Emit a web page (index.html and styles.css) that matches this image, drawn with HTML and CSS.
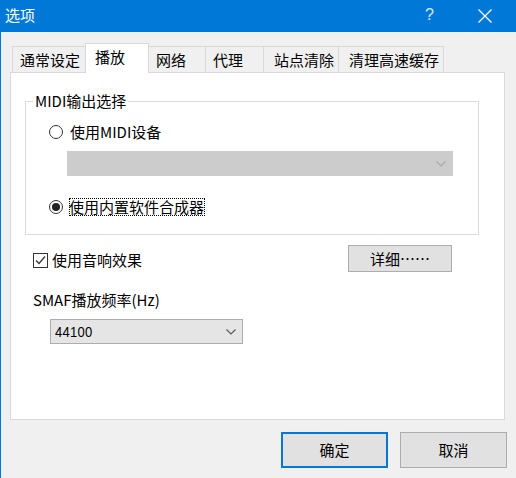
FILE: index.html
```html
<!DOCTYPE html>
<html lang="zh-CN">
<head>
<meta charset="utf-8">
<title>选项</title>
<link rel="stylesheet" href="styles.css">
</head>
<body>
<div class="window">
  <div class="titlebar">
    <span class="title">选项</span>
    <span class="help">?</span>
    <span class="close">
      <svg width="14" height="14" viewBox="0 0 14 14"><path d="M0.5 0.5 L13.5 13.5 M13.5 0.5 L0.5 13.5" stroke="#fff" stroke-width="1.2" fill="none"/></svg>
    </span>
  </div>
  <div class="body">
    <div class="tabs">
      <div class="tab w1">通常设定</div>
      <div class="tab sel w2">播放</div>
      <div class="tab w3">网络</div>
      <div class="tab w4">代理</div>
      <div class="tab w5">站点清除</div>
      <div class="tab w6">清理高速缓存</div>
    </div>
    <div class="pane">
      <div class="group">
        <div class="legend">MIDI输出选择</div>
        <div class="radio-row first"><span class="radio"></span><span>使用MIDI设备</span></div>
        <div class="combo disabled">
          <svg width="10" height="6" viewBox="0 0 10 6"><path d="M0.5 0.5 L5 5 L9.5 0.5" stroke="#a9a9a9" stroke-width="1.1" fill="none"/></svg>
        </div>
        <div class="radio-row second"><span class="radio on"></span><span class="focus">使用内置软件合成器</span></div>
      </div>
      <div class="effects-row">
        <div class="check-row">
          <span class="checkbox"><svg width="13" height="13" viewBox="0 0 13 13"><path d="M2 6.5 L5 9.5 L11 2.5" stroke="#333" stroke-width="1.2" fill="none"/></svg></span>
          <span>使用音响效果</span>
        </div>
        <div class="btn detail">详细……</div>
      </div>
      <div class="field-label">SMAF播放频率(Hz)</div>
      <div class="combo freq">
        <span class="value">44100</span>
        <svg width="10" height="6" viewBox="0 0 10 6"><path d="M0.5 0.5 L5 5 L9.5 0.5" stroke="#555" stroke-width="1.1" fill="none"/></svg>
      </div>
    </div>
    <div class="footer">
      <div class="btn big ok">确定</div>
      <div class="btn big">取消</div>
    </div>
  </div>
</div>
</body>
</html>
```

FILE: styles.css
```css
* { box-sizing: border-box; }
html, body { margin: 0; padding: 0; }
body {
  font-family: "Noto Sans CJK SC", "Noto Sans", sans-serif;
  font-size: 15px;
  color: #000;
  background: #f0f0f0;
}
.window {
  width: 516px;
  height: 478px;
  border-left: 1px solid #0078d7;
  background: #f0f0f0;
  display: flex;
  flex-direction: column;
  overflow: hidden;
}
.titlebar {
  height: 32px;
  background: #0078d7;
  color: #fff;
  display: flex;
  align-items: center;
  padding-left: 4px;
  flex-shrink: 0;
}
.title { line-height: 20px; flex: 1; margin-top: -2px; }
.help {
  font-family: "Liberation Sans", sans-serif;
  font-size: 16px;
  font-weight: 300;
  width: 12px;
  margin-right: 41px;
  margin-top: -2px;
  color: #dbe9f7;
}
.close { width: 14px; height: 14px; margin-right: 24px; margin-top: -1px; display: flex; }

.body { padding: 11px 0 0 9px; }

.tabs {
  display: flex;
  align-items: flex-end;
  height: 29px;
  margin-left: 2px;
}
.tab {
  height: 26px;
  border: 1px solid #d9d9d9;
  border-bottom: none;
  margin-right: -1px;
  background: #f0f0f0;
  display: flex;
  align-items: center;
  line-height: 20px;
  padding-top: 1px;
  padding-left: 7px;
}
.tab.sel {
  height: 30px;
  margin-bottom: -1px;
  background: #fff;
  position: relative;
  z-index: 1;
  padding-top: 0;
  padding-bottom: 4px;
  padding-left: 9px;
}
.w1 { width: 74px; }
.w2 { width: 64px; }
.w3 { width: 58px; }
.w4 { width: 59px; }
.w5 { width: 76px; padding-left: 10px; }
.w6 { width: 106px; padding-left: 10px; }

.pane {
  width: 495px;
  height: 348px;
  border: 1px solid #d9d9d9;
  background: #fff;
}
.group {
  margin: 28px 0 0 14px;
  width: 454px;
  height: 134px;
  border: 1px solid #dcdcdc;
}
.legend {
  width: max-content;
  margin: -11px 0 0 7px;
  padding: 0 2px;
  line-height: 20px;
  background: #fff;
}
.radio-row {
  display: flex;
  align-items: center;
  height: 20px;
  margin-left: 23px;
  line-height: 20px;
}
.radio-row.first { margin-top: 11px; }
.radio-row.second { margin-top: 21px; }
.radio {
  width: 14px;
  height: 14px;
  border: 1px solid #333;
  border-radius: 50%;
  background: #fff;
  margin-right: 7px;
  display: flex;
  align-items: center;
  justify-content: center;
  flex-shrink: 0;
}
.radio.on::after {
  content: "";
  width: 8px;
  height: 8px;
  border-radius: 50%;
  background: #222;
}
.focus {
  outline: 1px dotted #000;
  outline-offset: -1px;
  padding: 0 1px 0 0;
  margin-left: -1px;
  line-height: 18px;
  height: 18px;
}
.combo {
  display: flex;
  align-items: center;
  justify-content: space-between;
}
.combo.disabled {
  margin: 9px 0 0 41px;
  width: 386px;
  height: 25px;
  background: #cccccc;
  border: 1px solid #cccccc;
  justify-content: flex-end;
  padding-right: 6px;
}
.effects-row {
  display: flex;
  align-items: center;
  height: 27px;
  margin-top: 10px;
  padding: 0 52px 0 22px;
}
.check-row {
  display: flex;
  align-items: center;
  line-height: 20px;
  margin-top: 3px;
}
.checkbox {
  width: 15px;
  height: 15px;
  border: 1px solid #333;
  background: #fff;
  display: flex;
  align-items: center;
  justify-content: center;
  margin-right: 4px;
}
.btn {
  background: #e1e1e1;
  border: 1px solid #adadad;
  display: flex;
  align-items: center;
  justify-content: center;
  line-height: 20px;
}
.detail {
  margin-left: auto;
  width: 104px;
  height: 27px;
}
.field-label {
  margin: 18px 0 0 22px;
  line-height: 20px;
  height: 20px;
}
.combo.freq {
  margin: 9px 0 0 39px;
  width: 193px;
  height: 25px;
  background: #e5e5e5;
  border: 1px solid #adadad;
  padding: 0 6px 0 4px;
}
.value {
  font-family: "Liberation Sans", sans-serif;
  font-size: 13px;
  letter-spacing: 0.3px;
  transform: scaleY(1.15);
}
.footer {
  display: flex;
  justify-content: flex-end;
  gap: 12px;
  margin-top: 12px;
  padding-right: 9px;
}
.btn.big {
  width: 107px;
  height: 36px;
}
.btn.ok {
  border: 2px solid #0078d7;
}
```
